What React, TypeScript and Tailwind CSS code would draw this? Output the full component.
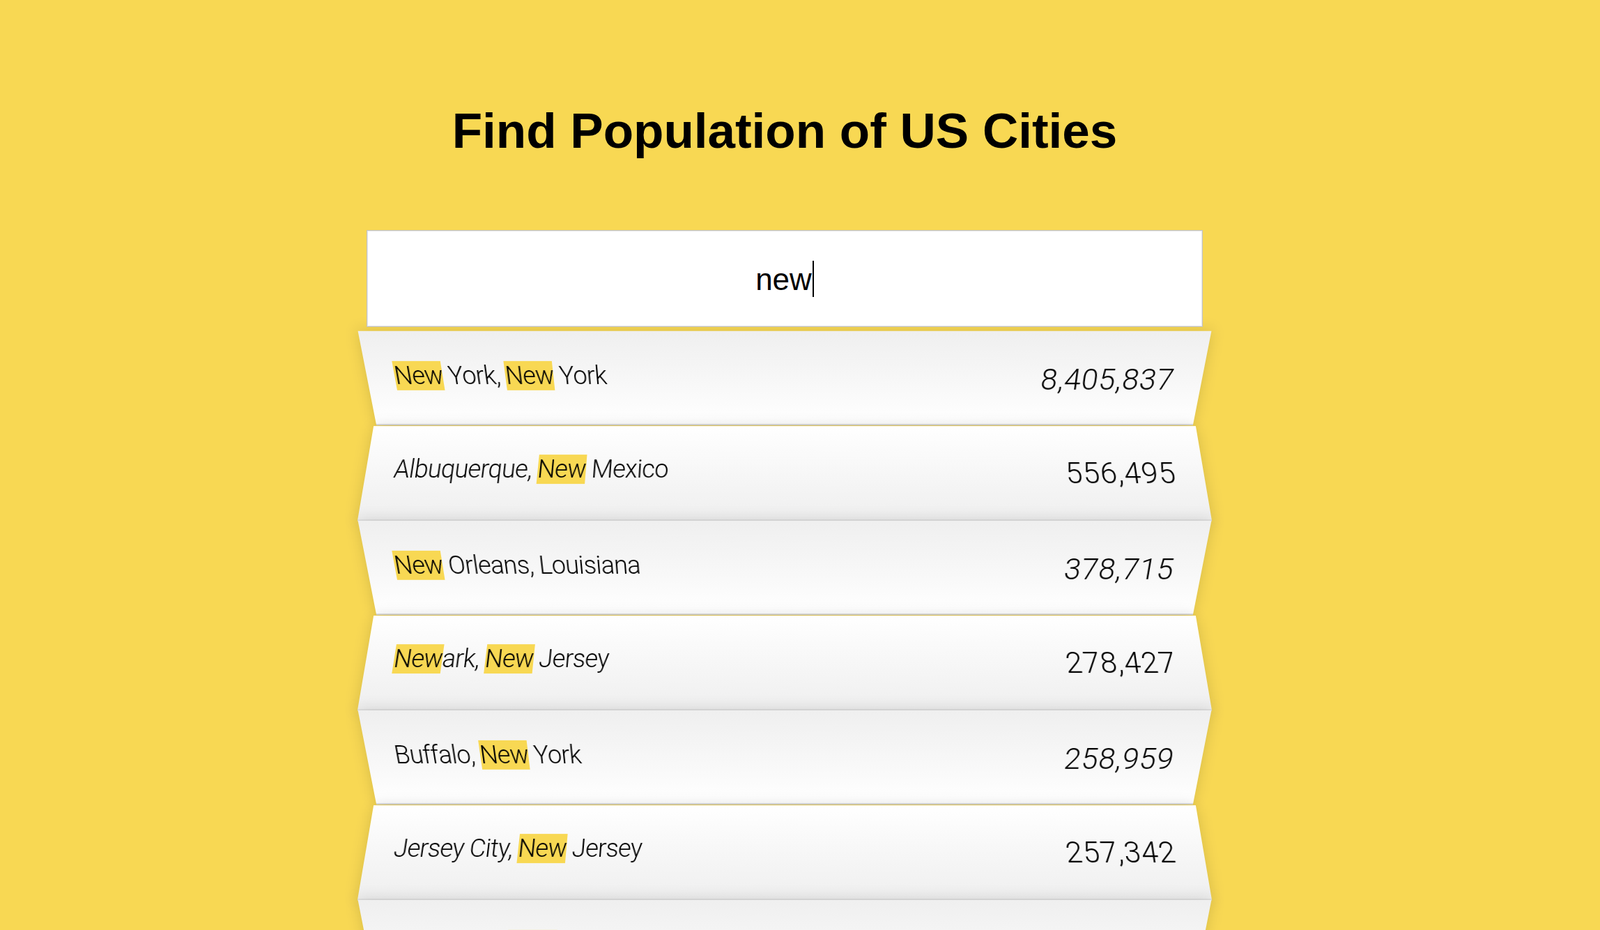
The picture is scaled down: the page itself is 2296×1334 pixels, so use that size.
import React from "react";

const cities: { name: string; pop: string }[] = [
  { name: "New York, New York", pop: "8,405,837" },
  { name: "Albuquerque, New Mexico", pop: "556,495" },
  { name: "New Orleans, Louisiana", pop: "378,715" },
  { name: "Newark, New Jersey", pop: "278,427" },
  { name: "Buffalo, New York", pop: "258,959" },
  { name: "Jersey City, New Jersey", pop: "257,342" },
  { name: "Rochester, New York", pop: "210,358" },
];

function Highlight({ text }: { text: string }) {
  const parts = text.split(/(new)/i);
  return (
    <>
      {parts.map((p, i) =>
        /^new$/i.test(p) ? (
          <span key={i} className="bg-[#f8d853]">
            {p}
          </span>
        ) : (
          <span key={i}>{p}</span>
        )
      )}
    </>
  );
}

export default function App() {
  return (
    <div className="w-full h-[1334px] overflow-hidden bg-[#f8d853] flex flex-col items-center pr-[44px]">
      <h1 className="mt-[152px] font-['Liberation_Sans',Arial,sans-serif] font-bold text-[71px] leading-none text-black whitespace-nowrap">
        Find Population of US Cities
      </h1>
      <div className="mt-[107px] w-[1200px] flex flex-col">
        <div className="relative z-10 w-[1200px] h-[139px] bg-white border border-[#c2c2c2] shadow-[inset_0_0_0_1px_#e9e9e9] flex items-center justify-center">
          <span className="mt-[3px] font-['Liberation_Sans',Arial,sans-serif] text-[44px] leading-none text-black">
            new
          </span>
          <span className="w-[2px] h-[52px] bg-black ml-[1px]" />
        </div>
        <ul className="mt-[1px] m-0 p-0 list-none">
          {cities.map((c, i) => {
            const odd = i % 2 === 0;
            return (
              <li
                key={c.name}
                className={
                  odd
                    ? "flex justify-between items-start box-border h-[136px] px-[40px] pt-[36px] border-b-2 border-[#d8d8d8] shadow-[0_0_20px_rgba(0,0,0,0.14)] bg-linear-to-t from-white to-[#efefef] [transform:perspective(160px)_rotateX(-3deg)_translateY(6px)]"
                    : "flex justify-between items-start box-border h-[136px] px-[40px] pt-[36px] border-b-2 border-[#d8d8d8] shadow-[0_0_20px_rgba(0,0,0,0.14)] bg-linear-to-b from-white to-[#efefef] [transform:perspective(160px)_rotateX(2.6deg)_translateY(4px)_scale(1.001)]"
                }
              >
                <span className="font-['Roboto','Liberation_Sans',sans-serif] font-light text-[36px] tracking-[-0.7px] leading-normal text-black whitespace-nowrap">
                  <Highlight text={c.name} />
                </span>
                <span className="font-['Roboto','Liberation_Sans',sans-serif] font-light text-[43px] tracking-[0.9px] leading-normal text-black whitespace-nowrap">
                  {c.pop}
                </span>
              </li>
            );
          })}
        </ul>
      </div>
    </div>
  );
}
